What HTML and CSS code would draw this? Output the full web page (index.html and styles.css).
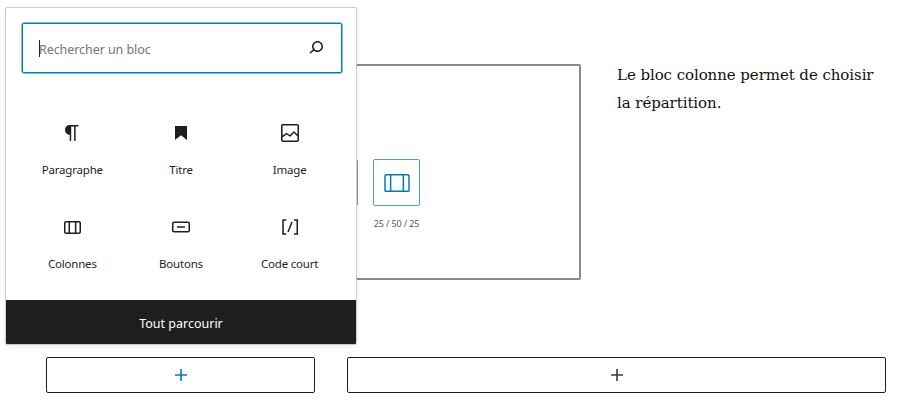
FILE: index.html
```html
<!DOCTYPE html>
<html lang="fr">
<head>
<meta charset="utf-8">
<title>Éditeur de blocs</title>
<link rel="stylesheet" href="styles.css">
</head>
<body>
<main class="editor">
  <div class="top-row">
    <section class="frame">
      <div class="tiles">
        <div class="tile-col"><div class="tile"></div></div>
        <div class="tile-col">
          <div class="tile tile-active">
            <svg class="tile-icon" viewBox="0 0 48 48"><rect x="8" y="13" width="32" height="22" rx="1.5" fill="none" stroke="currentColor" stroke-width="2"/><path d="M15.5 13v22M32.5 13v22" fill="none" stroke="currentColor" stroke-width="2"/></svg>
          </div>
          <div class="tile-label">25 / 50 / 25</div>
        </div>
      </div>
    </section>
    <p class="body-text">Le bloc colonne permet de choisir la répartition.</p>
  </div>
  <div class="bottom-row">
    <button class="appender appender-narrow appender-blue"><svg class="icon" viewBox="0 0 24 24"><path d="M18 11.2h-5.2V6h-1.6v5.2H6v1.6h5.2V18h1.6v-5.2H18z"/></svg></button>
    <button class="appender appender-wide"><svg class="icon" viewBox="0 0 24 24"><path d="M18 11.2h-5.2V6h-1.6v5.2H6v1.6h5.2V18h1.6v-5.2H18z"/></svg></button>
  </div>
</main>

<aside class="inserter">
  <div class="search-wrap">
    <div class="search">
      <span class="caret"></span>
      <span class="placeholder">Rechercher un bloc</span>
      <svg class="icon search-icon" viewBox="0 0 24 24"><path d="M13.5 6C10.5 6 8 8.5 8 11.5c0 1.1.3 2.1.9 3l-3.4 3 1 1.1 3.4-2.9c1 .9 2.2 1.4 3.6 1.4 3 0 5.5-2.5 5.5-5.5C19 8.5 16.5 6 13.5 6zm0 9.5c-2.2 0-4-1.8-4-4s1.8-4 4-4 4 1.8 4 4-1.8 4-4 4z"/></svg>
    </div>
  </div>
  <div class="blocks">
    <div class="block"><svg class="icon" viewBox="0 0 24 24"><path d="M18.3 4H9.9v-.1l-.9.2c-2.3.4-4 2.4-4 4.8s1.7 4.4 4 4.8l.7.1V20h1.5V5.5h2.9V20h1.5V5.5h2.7V4z"/></svg><span class="block-name">Paragraphe</span></div>
    <div class="block"><svg class="icon" viewBox="0 0 24 24"><path d="M6 5v14l6-4.8 6 4.8V5H6z"/></svg><span class="block-name">Titre</span></div>
    <div class="block"><svg class="icon" viewBox="0 0 24 24"><path d="M19 3H5c-1.1 0-2 .9-2 2v14c0 1.1.9 2 2 2h14c1.1 0 2-.9 2-2V5c0-1.1-.9-2-2-2zM5 4.5h14c.3 0 .5.2.5.5v8.4l-3-2.9c-.3-.3-.8-.3-1 0L11.9 14 9 12c-.3-.2-.6-.2-.8 0l-3.6 2.6V5c-.1-.3.1-.5.4-.5zm14 15H5c-.3 0-.5-.2-.5-.5v-2.4l4.1-3 3 1.9c.3.2.7.2.9-.1L16 12l3.5 3.4V19c0 .3-.2.5-.5.5z"/></svg><span class="block-name">Image</span></div>
    <div class="block"><svg class="icon" viewBox="0 0 24 24"><path d="M19 6H6c-1.1 0-2 .9-2 2v9c0 1.100.9 2 2 2h13c1.100 0 2-.9 2-2V8c0-1.100-.9-2-2-2zm-4.100 1.500v10H10v-10h4.900zM5.500 17V8c0-.3.2-.5.500-.5h2.500v10H6c-.3 0-.5-.2-.5-.5zm14 0c0 .3-.2.5-.5.5h-2.600v-10H19c.3 0 .5.2.5.5v9z"/></svg><span class="block-name">Colonnes</span></div>
    <div class="block"><svg class="icon" viewBox="0 0 24 24"><path d="M19 6.500H5c-1.100 0-2 .9-2 2v7c0 1.100.9 2 2 2h14c1.100 0 2-.9 2-2v-7c0-1.100-.9-2-2-2zm.5 9c0 .3-.2.5-.5.5H5c-.3 0-.5-.2-.5-.5v-7c0-.3.2-.5.5-.5h14c.3 0 .5.2.5.5v7zM8 12.800h8v-1.500H8v1.500z"/></svg><span class="block-name">Boutons</span></div>
    <div class="block"><svg class="icon" viewBox="0 0 24 24"><path d="M16 4.200v1.500h2.500v12.500H16v1.500h4V4.200h-4zM4.200 19.800h4v-1.500H5.800V5.800h2.500V4.200h-4l-.1 15.600zm5.100-3.100l1.400.6 4-10-1.400-.6-4 10z"/></svg><span class="block-name">Code court</span></div>
  </div>
  <button class="browse-all">Tout parcourir</button>
</aside>
</body>
</html>
```
FILE: styles.css
```css
* { box-sizing: border-box; }
html, body { margin: 0; padding: 0; background: #fff; }
body { font-family: "Noto Sans", sans-serif; color: #1e1e1e; }

.editor { padding: 61px 18px 0 46px; }
.top-row { display: flex; align-items: flex-start; }
.frame {
  width: 535px;
  height: 216px;
  flex: none;
  margin-top: 3px;
  border: 2px solid #8a8a8a;
  border-radius: 2px;
  padding: 93px 0 0 263px;
}
.tiles { display: flex; gap: 15px; }
.tile-col { width: 47px; flex: none; display: flex; flex-direction: column; align-items: center; }
.tile { width: 47px; height: 47px; border: 1px solid #949494; border-radius: 2px; display: flex; align-items: center; justify-content: center; background: #fff; }
.tile-active { border-color: #4f9ccb; color: #007cba; }
.tile-icon { width: 36px; height: 36px; display: block; }
.tile-label { margin-top: 11px; font-size: 9px; letter-spacing: -.1px; line-height: 14px; color: #555; white-space: nowrap; }

.body-text {
  margin: 0 0 0 36px;
  width: 270px;
  font-family: "DejaVu Serif", serif;
  font-size: 15px;
  letter-spacing: -.07px;
  line-height: 28px;
  color: #111;
}

.bottom-row { display: flex; gap: 32px; margin-top: 77px; }
.appender { height: 36px; padding: 0; background: #fff; border: 1px solid #1e1e1e; border-radius: 2px; display: flex; align-items: center; justify-content: center; color: #3c3c3c; }
.appender-narrow { width: 269px; }
.appender-wide { width: 539px; }
.appender-blue { color: #007cba; }

.icon { width: 24px; height: 24px; display: block; fill: currentColor; flex: none; }

.inserter {
  position: absolute;
  left: 5px;
  top: 7px;
  width: 352px;
  height: 338px;
  background: #fff;
  border: 1px solid #ccc;
  border-radius: 2px;
  box-shadow: 0 2px 6px rgba(0, 0, 0, .08);
  display: flex;
  flex-direction: column;
}
.search-wrap { padding: 15px 14px 0 16px; }
.search {
  height: 50px;
  border: 1px solid #007cba;
  border-radius: 2px;
  box-shadow: 0 0 0 .5px #007cba;
  display: flex;
  align-items: center;
  padding: 0 13px 0 16px;
}
.caret { width: 1px; height: 17px; background: #1e1e1e; flex: none; }
.placeholder { font-size: 12.5px; letter-spacing: -.07px; line-height: 18px; padding-top: 4px; margin-left: -1px; color: #757575; flex: 1; }
.search-icon { margin-top: -2px; }

.blocks {
  flex: 1;
  min-height: 0;
  display: grid;
  grid-template-columns: repeat(3, 1fr);
  grid-auto-rows: 94px;
  padding: 48px 12px 0;
}
.block { display: flex; flex-direction: column; align-items: center; }
.block-name { margin-top: 16px; font-size: 11.5px; letter-spacing: -.2px; line-height: 17px; white-space: nowrap; }

.browse-all {
  height: 44px;
  border: 0;
  padding: 2px 0 0;
  background: #1e1e1e;
  color: #fff;
  font-family: inherit;
  font-size: 12.5px;
  flex: none;
  border-radius: 0 0 1px 1px;
}
```
